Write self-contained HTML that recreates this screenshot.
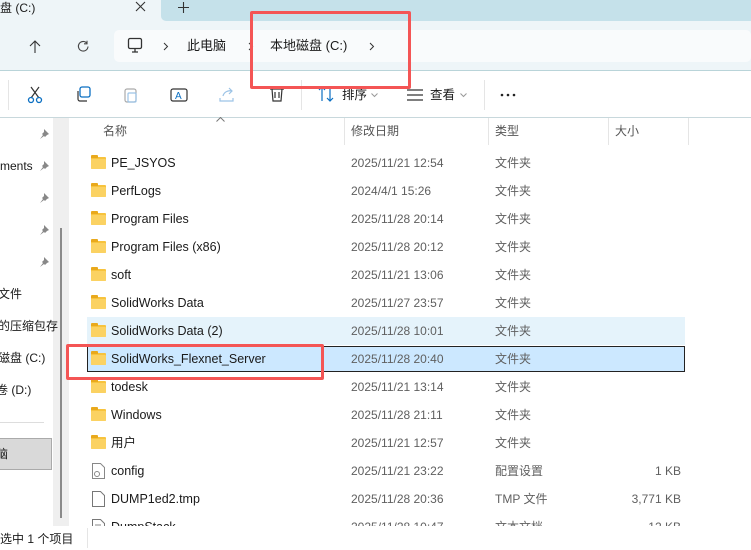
<!DOCTYPE html>
<html><head><meta charset="utf-8"><style>
*{margin:0;padding:0;box-sizing:border-box}
body{width:751px;height:550px;overflow:hidden;background:#fff;font-family:"Liberation Sans","Noto Sans CJK SC",sans-serif;font-size:12px;color:#1a1a1a;position:relative;line-height:14px}
.a{position:absolute;white-space:nowrap;line-height:14px}
.row{position:absolute;left:87px;width:598px;height:28px}
.row span{line-height:14px;white-space:nowrap}
.fold{position:absolute;left:4px;top:8px;width:15px;height:12px;background:#f7c33d;border-radius:1px}
.fold:before{content:"";position:absolute;left:0;top:-2px;width:7px;height:3px;background:#e9a91c;border-radius:1px 1px 0 0}
.fold:after{content:"";position:absolute;left:0;top:2px;width:15px;height:10px;background:#fbd262;border-radius:1px}
.nm{position:absolute;left:24px;top:7px;font-size:12.5px;color:#1a1a1a}
.dt{position:absolute;left:264px;top:7px;color:#5f5f5f}
.ty{position:absolute;left:408px;top:7px;color:#5f5f5f}
.sz{position:absolute;right:4px;top:7px;color:#5f5f5f}
.pin{position:absolute;left:39px;width:10px;height:10px}
</style></head><body>
<!-- tab strip -->
<div class="a" style="left:0;top:0;width:751px;height:70px;background:#eef5f8"></div>
<div class="a" style="left:161px;top:0;width:590px;height:21px;background:#c5e1ea;border-bottom-left-radius:5px"></div>
<div class="a" style="left:0;top:1px;font-size:12px">盘 (C:)</div>
<svg class="a" style="left:135px;top:1px" width="11" height="11"><path d="M1 1l9 9M10 1L1 10" stroke="#333" stroke-width="1.1"/></svg>
<svg class="a" style="left:178px;top:2px" width="11" height="11"><path d="M5.5 0v11M0 5.5h11" stroke="#333" stroke-width="1.1"/></svg>
<!-- address row -->
<div class="a" style="left:114px;top:30px;width:637px;height:32px;background:#f9fbfc;border-radius:5px"></div>
<div class="a" style="left:0;top:70px;width:751px;height:1px;background:#b9d4d9"></div>
<svg class="a" style="left:29px;top:40px" width="12" height="13"><path d="M6 1v12M1 6l5-5 5 5" fill="none" stroke="#333" stroke-width="1.1"/></svg>
<svg class="a" style="left:77px;top:40px" width="13" height="13"><path d="M11 6.5A4.8 4.8 0 1 1 9.5 2.8M10 0.8v3h-3" fill="none" stroke="#444" stroke-width="1.1"/></svg>
<svg class="a" style="left:127px;top:37px" width="17" height="17"><rect x="1.5" y="1.5" width="13" height="10" rx="1.5" fill="none" stroke="#333" stroke-width="1.3"/><path d="M8 11.5v3M5 15h6" stroke="#333" stroke-width="1.3"/></svg>
<svg class="a" style="left:163px;top:42px" width="6" height="9"><path d="M1 1l3.5 3.5L1 8" fill="none" stroke="#333"/></svg>
<div class="a" style="left:187px;top:39px;font-size:13px">此电脑</div>
<svg class="a" style="left:248px;top:42px" width="6" height="9"><path d="M1 1l3.5 3.5L1 8" fill="none" stroke="#333"/></svg>
<div class="a" style="left:270px;top:39px;font-size:13px">本地磁盘 (C:)</div>
<svg class="a" style="left:369px;top:42px" width="6" height="9"><path d="M1 1l3.5 3.5L1 8" fill="none" stroke="#333"/></svg>
<!-- toolbar -->
<div class="a" style="left:8px;top:80px;width:1px;height:30px;background:#e5e5e5"></div>
<svg class="a" style="left:26px;top:86px" width="18" height="18"><path d="M5 1l8 11M13 1L5 12" stroke="#333" stroke-width="1.2"/><circle cx="5" cy="14" r="2.5" fill="none" stroke="#0a6fc2" stroke-width="1.3"/><circle cx="13" cy="14" r="2.5" fill="none" stroke="#0a6fc2" stroke-width="1.3"/></svg>
<svg class="a" style="left:75px;top:86px" width="18" height="18"><rect x="5" y="1" width="10" height="10" rx="2" fill="none" stroke="#0a6fc2" stroke-width="1.3"/><path d="M3 5v8a2 2 0 002 2h7" fill="none" stroke="#333" stroke-width="1.2"/></svg>
<svg class="a" style="left:122px;top:86px" width="18" height="18"><rect x="3" y="3" width="11" height="13" rx="2" fill="none" stroke="#aaa" stroke-width="1.2"/><rect x="6" y="7" width="8" height="9" rx="1" fill="none" stroke="#9cc3e6" stroke-width="1.2"/></svg>
<svg class="a" style="left:170px;top:86px" width="18" height="18"><rect x="1" y="3" width="16" height="12" rx="2" fill="none" stroke="#333" stroke-width="1.2"/><text x="5" y="13" font-size="10" fill="#0a6fc2" font-family="Liberation Sans">A</text></svg>
<svg class="a" style="left:218px;top:86px" width="18" height="18"><path d="M2 12v3h13v-3M5 10c1-4 5-6 9-5M11 2l3 3-3 3" fill="none" stroke="#9cc3e6" stroke-width="1.2"/></svg>
<svg class="a" style="left:268px;top:86px" width="18" height="18"><path d="M2 3h14M4 3l1 12h8l1-12M7 6v6M11 6v6" fill="none" stroke="#333" stroke-width="1.2"/></svg>
<div class="a" style="left:301px;top:80px;width:1px;height:30px;background:#e5e5e5"></div>
<svg class="a" style="left:318px;top:86px" width="16" height="16"><path d="M4 15V1M1 4l3-3 3 3M12 1v14M9 12l3 3 3-3" fill="none" stroke="#0a6fc2" stroke-width="1.2"/></svg>
<div class="a" style="left:342px;top:88px;font-size:12.5px">排序</div>
<svg class="a" style="left:371px;top:93px" width="7" height="5"><path d="M.5.5l3 3 3-3" fill="none" stroke="#999"/></svg>
<svg class="a" style="left:407px;top:89px" width="16" height="12"><path d="M0 1h16M0 6h16M0 11h16" stroke="#333" stroke-width="1.2"/></svg>
<div class="a" style="left:430px;top:88px;font-size:12.5px">查看</div>
<svg class="a" style="left:460px;top:93px" width="7" height="5"><path d="M.5.5l3 3 3-3" fill="none" stroke="#999"/></svg>
<div class="a" style="left:484px;top:80px;width:1px;height:30px;background:#e5e5e5"></div>
<svg class="a" style="left:500px;top:93px" width="16" height="4"><circle cx="2" cy="2" r="1.3" fill="#222"/><circle cx="8" cy="2" r="1.3" fill="#222"/><circle cx="14" cy="2" r="1.3" fill="#222"/></svg>
<div class="a" style="left:0;top:117px;width:751px;height:1px;background:#c8d8dc"></div>
<!-- left pane -->
<div class="a" style="left:53px;top:118px;width:16px;height:408px;background:#efefef"></div>
<div class="a" style="left:60px;top:228px;width:2px;height:290px;background:#8a8a8a"></div>
<div class="a" style="left:0;top:159px;font-size:12px">ments</div>
<svg class="pin" style="top:129px" viewBox="0 0 10 10"><path d="M5 0l5 5-2 1-2 2-1-1-4 3 3-4-1-1 2-2z" fill="#888"/></svg>
<svg class="pin" style="top:161px" viewBox="0 0 10 10"><path d="M5 0l5 5-2 1-2 2-1-1-4 3 3-4-1-1 2-2z" fill="#888"/></svg>
<svg class="pin" style="top:193px" viewBox="0 0 10 10"><path d="M5 0l5 5-2 1-2 2-1-1-4 3 3-4-1-1 2-2z" fill="#888"/></svg>
<svg class="pin" style="top:225px" viewBox="0 0 10 10"><path d="M5 0l5 5-2 1-2 2-1-1-4 3 3-4-1-1 2-2z" fill="#888"/></svg>
<svg class="pin" style="top:257px" viewBox="0 0 10 10"><path d="M5 0l5 5-2 1-2 2-1-1-4 3 3-4-1-1 2-2z" fill="#888"/></svg>
<div class="a" style="left:-2px;top:287px">文件</div>
<div class="a" style="left:-2px;top:319px">的压缩包存</div>
<div class="a" style="left:-2px;top:351px">磁盘 (C:)</div>
<div class="a" style="left:-4px;top:383px">卷 (D:)</div>
<div class="a" style="left:0;top:422px;width:44px;height:1px;background:#ddd"></div>
<div class="a" style="left:0;top:438px;width:52px;height:32px;background:#d9d9d9;border:1px solid #aaa;border-left:none"></div>
<div class="a" style="left:-4px;top:447px">脑</div>
<!-- header -->
<div class="a" style="left:103px;top:124px;color:#555">名称</div>
<svg class="a" style="left:216px;top:117px" width="9" height="5"><path d="M.5 4.5l4-4 4 4" fill="none" stroke="#777"/></svg>
<div class="a" style="left:351px;top:124px;color:#555">修改日期</div>
<div class="a" style="left:495px;top:124px;color:#555">类型</div>
<div class="a" style="left:615px;top:124px;color:#555">大小</div>
<div class="a" style="left:344px;top:118px;width:1px;height:27px;background:#e5e5e5"></div>
<div class="a" style="left:488px;top:118px;width:1px;height:27px;background:#e5e5e5"></div>
<div class="a" style="left:608px;top:118px;width:1px;height:27px;background:#e5e5e5"></div>
<div class="a" style="left:688px;top:118px;width:1px;height:27px;background:#e5e5e5"></div>
<!-- rows -->
<div style="position:absolute;left:0;top:0;width:751px;height:526px;overflow:hidden">
<div class="row" style="top:149px"><i class="fold"></i><span class="nm">PE_JSYOS</span><span class="dt">2025/11/21 12:54</span><span class="ty">文件夹</span></div>
<div class="row" style="top:177px"><i class="fold"></i><span class="nm">PerfLogs</span><span class="dt">2024/4/1 15:26</span><span class="ty">文件夹</span></div>
<div class="row" style="top:205px"><i class="fold"></i><span class="nm">Program Files</span><span class="dt">2025/11/28 20:14</span><span class="ty">文件夹</span></div>
<div class="row" style="top:233px"><i class="fold"></i><span class="nm">Program Files (x86)</span><span class="dt">2025/11/28 20:12</span><span class="ty">文件夹</span></div>
<div class="row" style="top:261px"><i class="fold"></i><span class="nm">soft</span><span class="dt">2025/11/21 13:06</span><span class="ty">文件夹</span></div>
<div class="row" style="top:289px"><i class="fold"></i><span class="nm">SolidWorks Data</span><span class="dt">2025/11/27 23:57</span><span class="ty">文件夹</span></div>
<div class="row" style="top:317px;background:#e5f3fb"><i class="fold"></i><span class="nm">SolidWorks Data (2)</span><span class="dt">2025/11/28 10:01</span><span class="ty">文件夹</span></div>
<div class="row" style="top:346px;height:26px;background:#cce8ff;border:1px solid #222"><i class="fold" style="left:3px;top:6px"></i><span class="nm" style="left:23px;top:5px">SolidWorks_Flexnet_Server</span><span class="dt" style="left:263px;top:5px">2025/11/28 20:40</span><span class="ty" style="left:407px;top:5px">文件夹</span></div>
<div class="row" style="top:373px"><i class="fold"></i><span class="nm">todesk</span><span class="dt">2025/11/21 13:14</span><span class="ty">文件夹</span></div>
<div class="row" style="top:401px"><i class="fold"></i><span class="nm">Windows</span><span class="dt">2025/11/28 21:11</span><span class="ty">文件夹</span></div>
<div class="row" style="top:429px"><i class="fold"></i><span class="nm">用户</span><span class="dt">2025/11/21 12:57</span><span class="ty">文件夹</span></div>
<div class="row" style="top:457px"><svg style="position:absolute;left:5px;top:6px" width="13" height="16"><path d="M.5.5h8l4 4v11H.5z" fill="#fff" stroke="#888"/><circle cx="5" cy="11" r="2.5" fill="none" stroke="#888"/></svg><span class="nm">config</span><span class="dt">2025/11/21 23:22</span><span class="ty">配置设置</span><span class="sz">1 KB</span></div>
<div class="row" style="top:485px"><svg style="position:absolute;left:5px;top:6px" width="13" height="16"><path d="M.5.5h8l4 4v11H.5z" fill="#fff" stroke="#777"/></svg><span class="nm">DUMP1ed2.tmp</span><span class="dt">2025/11/28 20:36</span><span class="ty">TMP 文件</span><span class="sz">3,771 KB</span></div>
<div class="row" style="top:513px"><svg style="position:absolute;left:5px;top:6px" width="13" height="16"><path d="M.5.5h8l4 4v11H.5z" fill="#fff" stroke="#777"/><path d="M3 6h6M3 9h6" stroke="#888"/></svg><span class="nm">DumpStack</span><span class="dt">2025/11/28 10:47</span><span class="ty">文本文档</span><span class="sz">12 KB</span></div>
</div>
<!-- status -->
<div class="a" style="left:0;top:532px;font-size:12px">选中 1 个项目</div>
<div class="a" style="left:87px;top:528px;width:1px;height:20px;background:#e5e5e5"></div>
<!-- red boxes -->
<div class="a" style="left:250px;top:11px;width:161px;height:78px;border:3px solid #f45555;border-radius:2px"></div>
<div class="a" style="left:66px;top:344px;width:258px;height:36px;border:3px solid #f45555;border-radius:2px"></div>
</body></html>
